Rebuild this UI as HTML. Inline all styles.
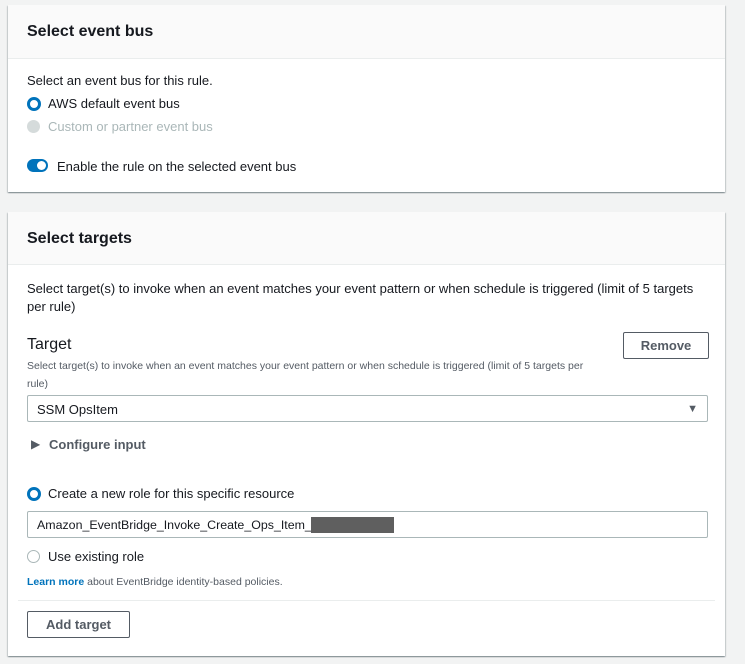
<!DOCTYPE html>
<html><head><style>
body{margin:0;width:745px;height:664px;background:#f2f3f3;font-family:"Liberation Sans",Arial,sans-serif;color:#16191f;position:relative;overflow:hidden}
.card{position:absolute;left:8px;width:717px;background:#fff;box-shadow:0 1px 1px 0 rgba(0,28,36,.3),1px 1px 1px 0 rgba(0,28,36,.15),-1px 1px 1px 0 rgba(0,28,36,.15)}
.hd{background:#fafafa;border-bottom:1px solid #eaeded;position:absolute;left:0;right:0;top:0}
.hd span{position:absolute;left:19px;font-size:16px;font-weight:bold}
.a{position:absolute;white-space:nowrap}
.t14{font-size:13px}
.radio{position:absolute;width:8px;height:8px;border-radius:50%;border:3px solid #0073bb;background:#fff}
.radio.off{border:1px solid #aab7b8;width:11px;height:11px}
.radio.dis{border:1px solid #d5dbdb;background:#d5dbdb;width:11px;height:11px}
.box{position:absolute;border:1px solid #aab7b8;border-radius:2px;background:#fff}
.btn{position:absolute;border:1px solid #545b64;border-radius:2px;background:#fff;font-weight:bold;font-size:13px;color:#545b64;text-align:center}
</style></head><body>
<div class="card" style="top:5px;height:187px">
 <div class="hd" style="height:53px"><span style="top:18px">Select event bus</span></div>
 <div class="a t14" style="left:19px;top:68px">Select an event bus for this rule.</div>
 <div class="radio" style="left:19px;top:92px"></div>
 <div class="a t14" style="left:40px;top:91px">AWS default event bus</div>
 <div class="radio dis" style="left:19px;top:115px"></div>
 <div class="a t14" style="left:40px;top:114px;color:#aab7b8">Custom or partner event bus</div>
 <div class="a" style="left:19px;top:154px;width:21px;height:13px;border-radius:7px;background:#0073bb"><div style="position:absolute;right:2px;top:2px;width:9px;height:9px;border-radius:50%;background:#fff"></div></div>
 <div class="a t14" style="left:49px;top:154px">Enable the rule on the selected event bus</div>
</div>
<div class="card" style="top:212px;height:444px">
 <div class="hd" style="height:52px"><span style="top:18px">Select targets</span></div>
 <div class="a t14" style="left:19px;top:68px;white-space:normal;width:680px;line-height:18px">Select target(s) to invoke when an event matches your event pattern or when schedule is triggered (limit of 5 targets per rule)</div>
 <div class="a" style="left:19px;top:124px;font-size:16px">Target</div>
 <div class="a" style="left:19px;top:145px;font-size:10.5px;color:#545b64;white-space:normal;width:575px;line-height:18px">Select target(s) to invoke when an event matches your event pattern or when schedule is triggered (limit of 5 targets per rule)</div>
 <div class="btn" style="left:615px;top:120px;width:84px;height:25px;line-height:25px">Remove</div>
 <div class="box" style="left:19px;top:183px;width:679px;height:25px"><span class="a t14" style="left:9px;top:6px">SSM OpsItem</span><span class="a" style="right:9px;top:7px;font-size:11px;color:#545b64">▼</span></div>
 <div class="a" style="left:23px;top:225px;font-size:12px;color:#545b64">▶</div>
 <div class="a t14" style="left:41px;top:225px;font-weight:bold;color:#545b64">Configure input</div>
 <div class="radio" style="left:19px;top:275px"></div>
 <div class="a t14" style="left:40px;top:274px">Create a new role for this specific resource</div>
 <div class="box" style="left:19px;top:299px;width:679px;height:25px"><span class="a" style="left:9px;top:6px;font-size:12.4px">Amazon_EventBridge_Invoke_Create_Ops_Item_</span><span class="a" style="left:283px;top:5px;width:83px;height:16px;background:#5f5f5f"></span></div>
 <div class="radio off" style="left:19px;top:338px"></div>
 <div class="a t14" style="left:40px;top:337px">Use existing role</div>
 <div class="a" style="left:19px;top:364px;font-size:10.5px;color:#545b64"><b style="color:#0073bb">Learn more</b> about EventBridge identity-based policies.</div>
 <div class="a" style="left:10px;right:10px;top:388px;border-top:1px solid #eaeded"></div>
 <div class="btn" style="left:19px;top:399px;width:101px;height:25px;line-height:25px">Add target</div>
</div>
<div class="a" style="left:734px;top:0;width:11px;height:664px;background:#f2f3f3"></div>
</body></html>
